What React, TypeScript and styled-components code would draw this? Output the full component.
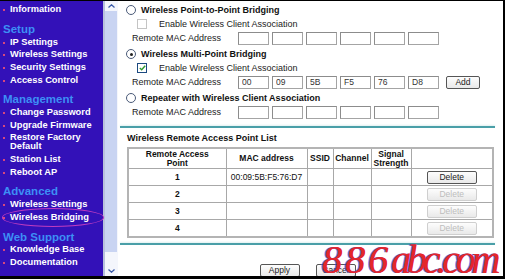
import React from "react";
import styled, { createGlobalStyle } from "styled-components";

const GlobalStyle = createGlobalStyle`
  body {
    margin: 0;
    background: #fff;
  }
`;

const Frame = styled.div`
  position: relative;
  width: 505px;
  height: 279px;
  box-sizing: border-box;
  display: flex;
  overflow: hidden;
  background: #fff;
  border-top: 1px solid #000;
  border-right: 2px solid #000;
  border-bottom: 3px solid #000;
  font-family: "Liberation Sans", Arial, sans-serif;
`;

/* ---------- left menu ---------- */

const Sidebar = styled.nav`
  width: 103px;
  flex-shrink: 0;
  box-sizing: border-box;
  padding-top: 2.5px;
  background: #3311b8;
`;

const Heading = styled.div`
  margin-top: 7px;
  padding-left: 3px;
  line-height: 13px;
  font-size: 11.5px;
  font-weight: bold;
  color: #3d8ff5;
`;

const Item = styled.div<{ $circled?: boolean }>`
  position: relative;
  display: flex;
  align-items: flex-start;
  padding: 1.8px 4px 1.8px 0;
  line-height: 9px;
  font-size: 9.3px;
  font-weight: bold;
  color: #fff;

  &::before {
    content: "";
    flex-shrink: 0;
    width: 2px;
    height: 2px;
    margin: 4px 5px 0 3px;
    background: #d8487c;
  }

  ${({ $circled }) =>
    $circled &&
    `
    &::after {
      content: "";
      position: absolute;
      left: 2px;
      right: -1px;
      top: -3px;
      bottom: -3px;
      border: 1px solid #c03cc0;
      border-radius: 50%;
    }
  `}
`;

const Scrollbar = styled.div`
  width: 15px;
  flex-shrink: 0;
  display: flex;
  flex-direction: column;
  box-sizing: border-box;
  border-left: 2px solid #b8c2dc;
  background: #f4f6fc;
`;

const Arrow = styled.div`
  height: 10px;
  display: flex;
  align-items: center;
  justify-content: center;
  color: #3a5aa8;
`;

const Thumb = styled.div`
  flex: 1;
  margin: 0 1px 0 0;
  background: #c9d4f2;
`;

const Track = styled.div`
  height: 14px;
`;

/* ---------- main panel ---------- */

const Main = styled.main`
  flex: 1;
  display: flex;
  flex-direction: column;
  padding-top: 2px;
  font-size: 9px;
  color: #222;
`;

const OptionRow = styled.div<{ $indent: number; $gap?: number }>`
  height: 14px;
  flex-shrink: 0;
  display: flex;
  align-items: center;
  margin-top: ${({ $gap }) => $gap ?? 0}px;
  padding-left: ${({ $indent }) => $indent}px;
`;

const Radio = styled.span<{ $checked?: boolean }>`
  width: 8px;
  height: 8px;
  margin-right: 5px;
  border: 1px solid #4a5a78;
  border-radius: 50%;
  background: #fff;
  display: flex;
  align-items: center;
  justify-content: center;

  &::after {
    content: "";
    width: 3px;
    height: 3px;
    border-radius: 50%;
    background: ${({ $checked }) => ($checked ? "#222" : "transparent")};
  }
`;

const OptionLabel = styled.span`
  font-weight: bold;
  color: #111;
`;

const Check = styled.span<{ $checked?: boolean }>`
  width: 8px;
  height: 8px;
  margin-right: 12px;
  border: 1px solid ${({ $checked }) => ($checked ? "#1c4a80" : "#c4c4c4")};
  background: #fff;
  display: flex;
  align-items: center;
  justify-content: center;
`;

const MacLabel = styled.span`
  width: 106px;
  flex-shrink: 0;
`;

const MacBox = styled.input`
  width: 31px;
  height: 13px;
  box-sizing: border-box;
  margin: 0 3px 0 0;
  padding: 0 0 0 3px;
  border: 1px solid #a4a4a4;
  border-top-color: #8c8c8c;
  border-left-color: #8c8c8c;
  background: #fff;
  font-family: inherit;
  font-size: 8.5px;
  color: #333;
  outline: none;
`;

const SmallButton = styled.button<{ $disabled?: boolean; $w: number }>`
  width: ${({ $w }) => $w}px;
  height: 13px;
  padding: 0;
  box-sizing: border-box;
  border: 1px solid ${({ $disabled }) => ($disabled ? "#cfcfcf" : "#555")};
  border-radius: 2px;
  background: linear-gradient(#fdfdfd, #e9e9e9);
  font-family: inherit;
  font-size: 8.5px;
  line-height: 11px;
  color: ${({ $disabled }) => ($disabled ? "#bdbdbd" : "#222")};
`;

const AddSlot = styled.span`
  margin-left: 4px;
  display: flex;
`;

const Rule = styled.div<{ $top: number }>`
  flex-shrink: 0;
  margin: ${({ $top }) => $top}px 8px 0 2px;
  height: 0;
  border-top: 2px solid #4a9fa8;
  box-shadow: 0 -1px 2px #dff0f0;
`;

const ListTitle = styled.div`
  margin: 4px 0 0 9px;
  line-height: 12px;
  font-weight: bold;
  color: #111;
`;

const Table = styled.table`
  margin: 3px 0 0 9px;
  width: 367px;
  border-collapse: collapse;
  border: 2px solid #b4b4b4;
  font-size: 8.5px;
  color: #111;

  th,
  td {
    border: 1px solid #a8a8a8;
    padding: 0;
    text-align: center;
    vertical-align: middle;
  }

  th {
    height: 19px;
    line-height: 9px;
    font-weight: bold;
  }

  td {
    height: 16px;
  }
`;

const NumCell = styled.td`
  font-weight: bold;
`;

const ButtonBar = styled.div`
  margin-top: 19px;
  display: flex;
  justify-content: center;
  gap: 16px;
  padding-right: 6px;
`;

const Watermark = styled.div`
  position: absolute;
  right: 7px;
  bottom: 1px;
  display: flex;
  align-items: baseline;
  font-family: "Liberation Serif", "Times New Roman", serif;
  font-style: italic;
  font-size: 40px;
  color: #e4262c;
  white-space: nowrap;
  text-shadow: -1.5px 0 0 rgba(50, 70, 220, 0.75), 0.5px 0 0 #e4262c;
  pointer-events: none;
`;

const WmPart = styled.span<{ $ls: number }>`
  display: inline-block;
  line-height: 0.72;
  letter-spacing: ${({ $ls }) => $ls}px;
`;

const CheckMark = () => (
  <svg width="7" height="6" viewBox="0 0 7 6">
    <path d="M0.8 3 L2.7 4.8 L6.2 0.8" fill="none" stroke="#2e9a2e" strokeWidth="1.4" />
  </svg>
);

const Chevron = ({ up }: { up?: boolean }) => (
  <svg width="7" height="4" viewBox="0 0 7 4">
    <path
      d={up ? "M0.5 3.5 L3.5 0.8 L6.5 3.5" : "M0.5 0.5 L3.5 3.2 L6.5 0.5"}
      fill="none"
      stroke="currentColor"
      strokeWidth="1.3"
    />
  </svg>
);

type NavEntry = { head?: boolean; label: string; circled?: boolean };

const nav: NavEntry[] = [
  { label: "Information" },
  { head: true, label: "Setup" },
  { label: "IP Settings" },
  { label: "Wireless Settings" },
  { label: "Security Settings" },
  { label: "Access Control" },
  { head: true, label: "Management" },
  { label: "Change Password" },
  { label: "Upgrade Firmware" },
  { label: "Restore Factory Default" },
  { label: "Station List" },
  { label: "Reboot AP" },
  { head: true, label: "Advanced" },
  { label: "Wireless Settings" },
  { label: "Wireless Bridging", circled: true },
  { head: true, label: "Web Support" },
  { label: "Knowledge Base" },
  { label: "Documentation" },
];

const MacRow = ({ values, add }: { values?: string[]; add?: boolean }) => (
  <OptionRow $indent={14}>
    <MacLabel>Remote MAC Address</MacLabel>
    {Array.from({ length: 6 }).map((_, i) => (
      <MacBox key={i} readOnly value={values ? values[i] : ""} />
    ))}
    {add && (
      <AddSlot>
        <SmallButton $w={34}>Add</SmallButton>
      </AddSlot>
    )}
  </OptionRow>
);

const apRows = [
  { n: "1", mac: "00:09:5B:F5:76:D7", active: true },
  { n: "2", mac: "", active: false },
  { n: "3", mac: "", active: false },
  { n: "4", mac: "", active: false },
];

export default function App() {
  return (
    <>
      <GlobalStyle />
      <Frame>
        <Sidebar>
          {nav.map((e, i) =>
            e.head ? (
              <Heading key={i}>{e.label}</Heading>
            ) : (
              <Item key={i} $circled={e.circled}>
                <span>{e.label}</span>
              </Item>
            )
          )}
        </Sidebar>

        <Scrollbar>
          <Arrow>
            <Chevron up />
          </Arrow>
          <Thumb />
          <Track />
          <Arrow>
            <Chevron />
          </Arrow>
        </Scrollbar>

        <Main>
          <OptionRow $indent={8}>
            <Radio />
            <OptionLabel>Wireless Point-to-Point Bridging</OptionLabel>
          </OptionRow>
          <OptionRow $indent={19}>
            <Check />
            <span>Enable Wireless Client Association</span>
          </OptionRow>
          <MacRow />

          <OptionRow $indent={8} $gap={2}>
            <Radio $checked />
            <OptionLabel>Wireless Multi-Point Bridging</OptionLabel>
          </OptionRow>
          <OptionRow $indent={19}>
            <Check $checked>
              <CheckMark />
            </Check>
            <span>Enable Wireless Client Association</span>
          </OptionRow>
          <MacRow values={["00", "09", "5B", "F5", "76", "D8"]} add />

          <OptionRow $indent={8} $gap={2}>
            <Radio />
            <OptionLabel>Repeater with Wireless Client Association</OptionLabel>
          </OptionRow>
          <MacRow />

          <Rule $top={7} />
          <ListTitle>Wireless Remote Access Point List</ListTitle>

          <Table>
            <colgroup>
              <col style={{ width: 98 }} />
              <col style={{ width: 81 }} />
              <col style={{ width: 26 }} />
              <col style={{ width: 38 }} />
              <col style={{ width: 40 }} />
              <col />
            </colgroup>
            <thead>
              <tr>
                <th>
                  Remote Access
                  <br />
                  Point
                </th>
                <th>MAC address</th>
                <th>SSID</th>
                <th>Channel</th>
                <th>
                  Signal
                  <br />
                  Strength
                </th>
                <th />
              </tr>
            </thead>
            <tbody>
              {apRows.map((r) => (
                <tr key={r.n}>
                  <NumCell>{r.n}</NumCell>
                  <td>{r.mac}</td>
                  <td />
                  <td />
                  <td />
                  <td>
                    <SmallButton $w={50} $disabled={!r.active}>
                      Delete
                    </SmallButton>
                  </td>
                </tr>
              ))}
            </tbody>
          </Table>

          <Rule $top={5} />

          <ButtonBar>
            <SmallButton $w={40}>Apply</SmallButton>
            <SmallButton $w={40}>Cancel</SmallButton>
          </ButtonBar>
        </Main>

        <Watermark>
          <WmPart $ls={3}>886</WmPart>
          <WmPart $ls={-4.2}>abc.com</WmPart>
        </Watermark>
      </Frame>
    </>
  );
}
